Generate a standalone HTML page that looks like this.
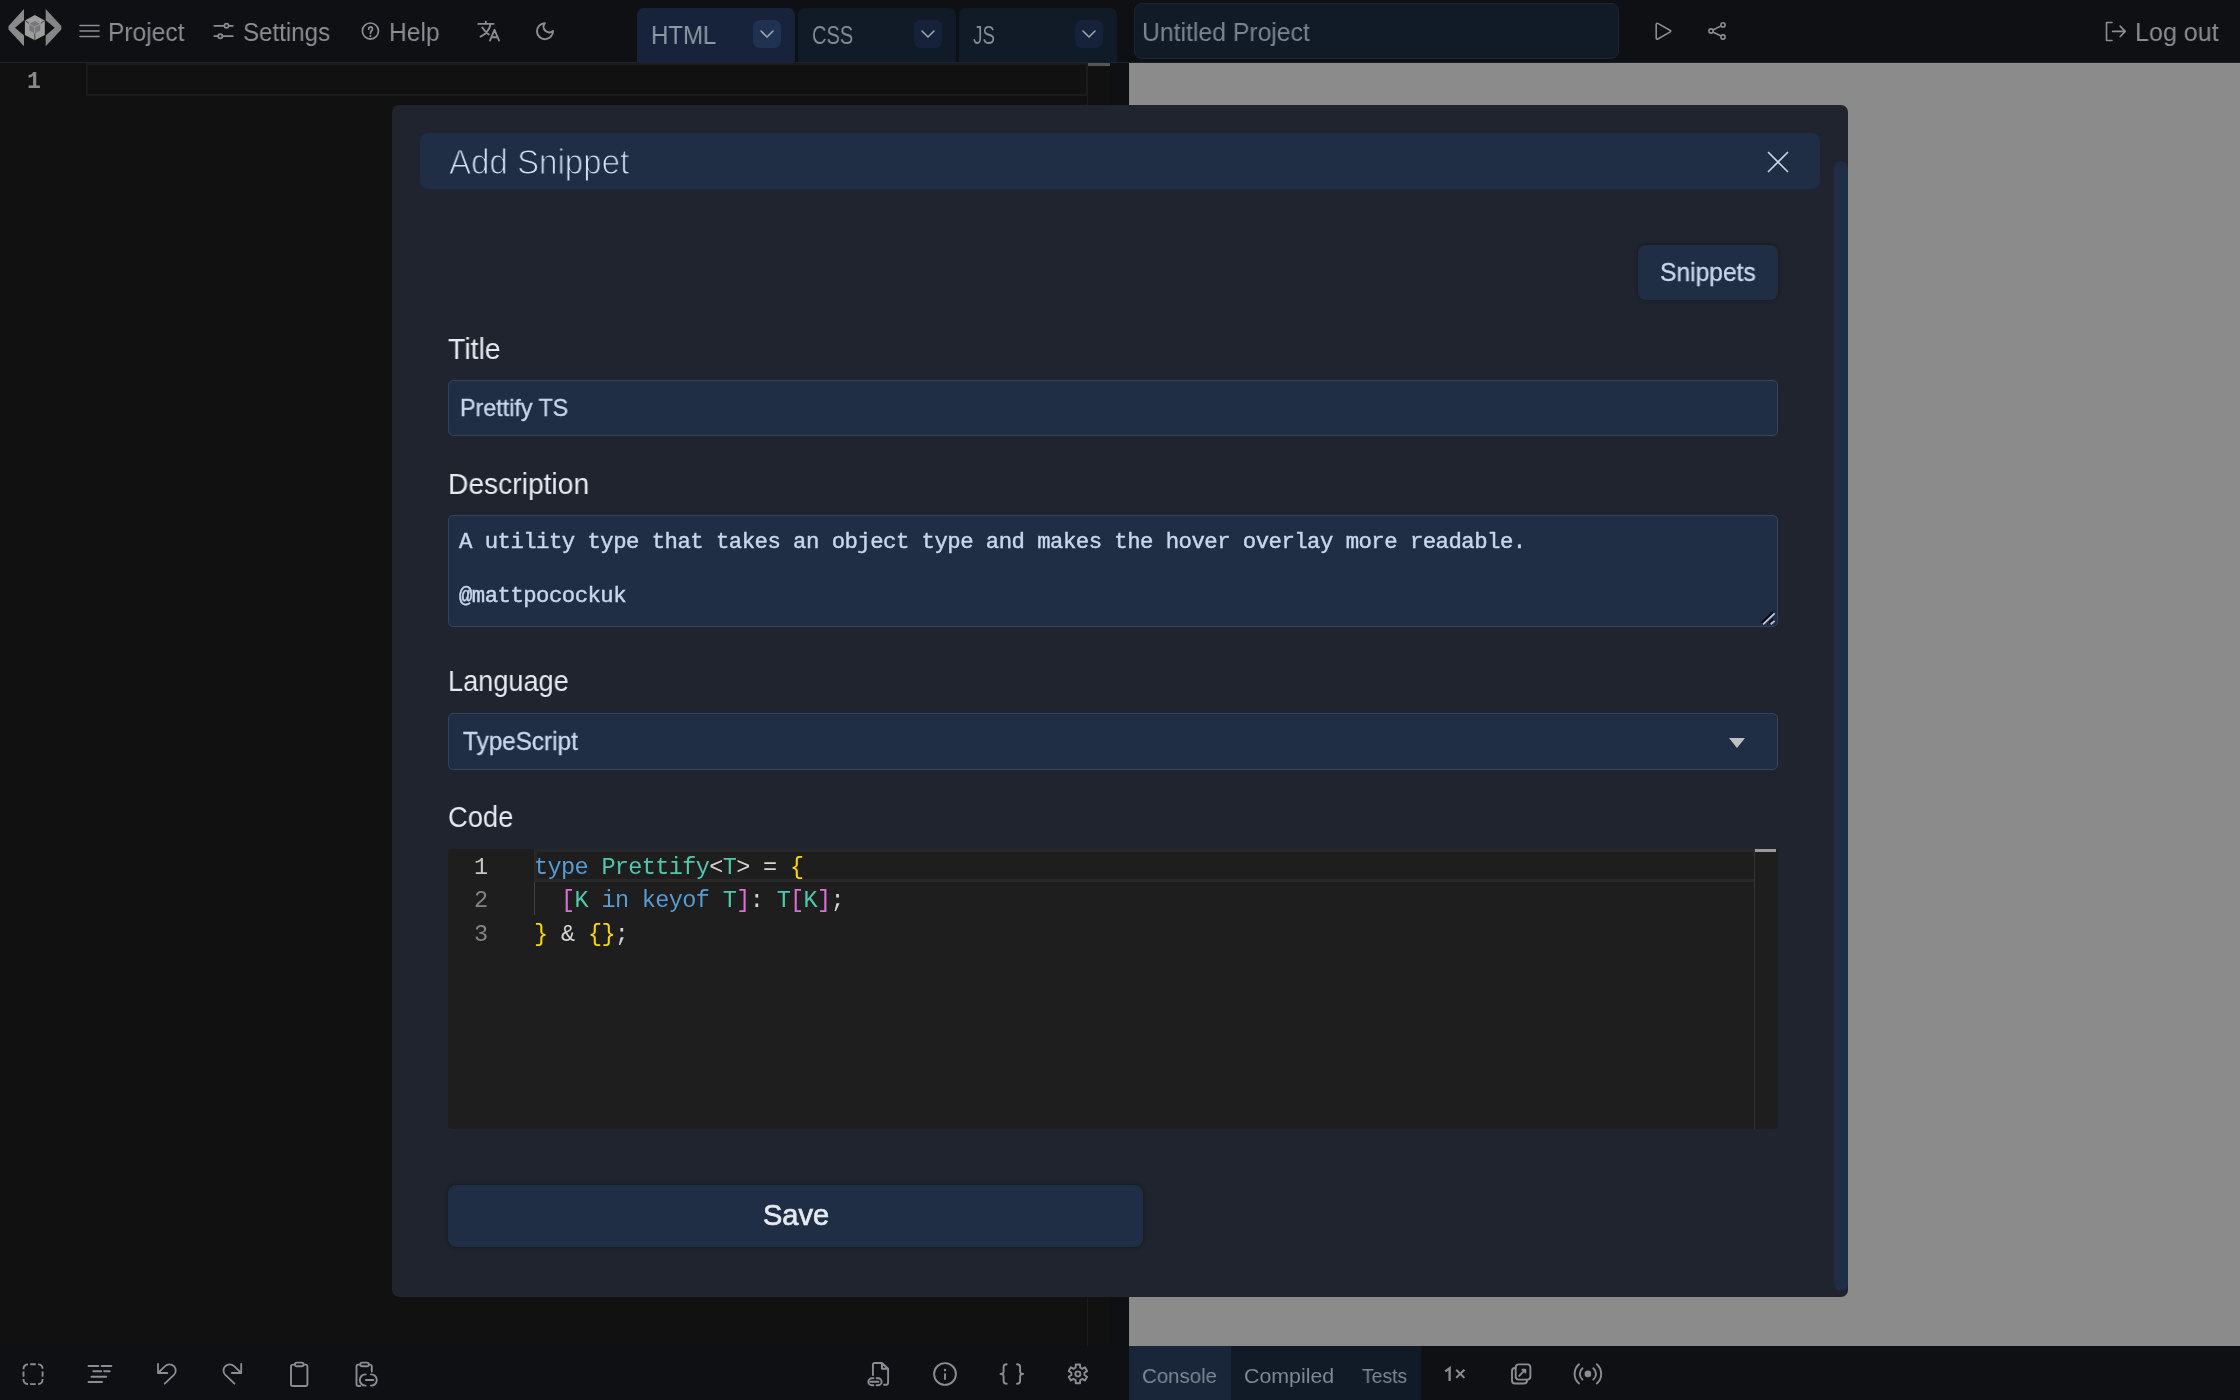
<!DOCTYPE html>
<html><head><meta charset="utf-8">
<style>
*{box-sizing:border-box;margin:0;padding:0}
html,body{width:2240px;height:1400px;overflow:hidden;background:#0e1014;font-family:"Liberation Sans",sans-serif;-webkit-font-smoothing:antialiased}
.a{position:absolute}
.t{position:absolute;white-space:pre;line-height:1;transform-origin:0 0;will-change:transform}
.mono{font-family:"Liberation Mono",monospace}
svg{position:absolute;overflow:visible}
#top{left:0;top:0;width:2240px;height:62px;background:#0e1014}
#topline{left:0;top:62px;width:2240px;height:1px;background:#1c2330}
.tb{color:#8a8d93;font-size:26px}
.tab{top:8px;height:54px;width:158px;border-radius:7px 7px 0 0;background:#111a27}
.dd{width:28px;height:28px;border-radius:7px;background:#15223a}
#editor{left:0;top:63px;width:1110px;height:1283px;background:#111111}
#result{left:1129px;top:63px;width:1111px;height:1283px;background:#8b8b8b}
#bottom{left:0;top:1346px;width:2240px;height:54px;background:#0e1014}
#modal{left:392px;top:105px;width:1456px;height:1192px;border-radius:7px;background:#1f242e}
.lbl{color:#e6eaf0;font-size:29px}
.inp{background:#1f2d45;border:1px solid #33445c;border-radius:5px}
.itx{color:#c8d6ea;-webkit-text-stroke:0.35px #c8d6ea}
</style></head><body>
<div id="top" class="a"></div>
<div id="topline" class="a"></div>
<div id="editor" class="a"></div>
<div id="result" class="a"></div>
<div id="bottom" class="a"></div>

<!-- logo -->
<svg style="left:0;top:0" width="70" height="56">
  <polygon fill="#8a8a8a" points="24,9 8.5,26 8.5,29.5 24,46.2 24,35.4 15,27.7 24,20.3"/>
  <polygon fill="#858585" points="45.7,9 61.3,26 61.3,29.5 45.7,46.2 45.7,35.4 54.7,27.7 45.7,20.3"/>
  <polygon fill="#9d9d9d" points="34.8,15 44.8,20.5 44.8,34.9 34.8,40.3 24.9,34.9 24.9,20.5"/>
  <polygon fill="#777" points="34.8,21 40.3,24 40.3,30.5 34.8,33.5 29.3,30.5 29.3,24"/>
  <path d="M29.3,24 L34.8,27 L40.3,24 M34.8,27 V33.5" stroke="#a3a3a3" stroke-width="0.8" fill="none"/>
  <path d="M34.8,33.5 V40M25.2,20.7L29,23.3M44.5,20.7L40.7,23.3" stroke="#3a3a3a" stroke-width="0.9"/>
</svg>
<!-- hamburger -->
<svg style="left:79px;top:24px" width="22" height="14"><path d="M1,1.5H20M1,7H20M1,12.5H20" stroke="#8a8d93" stroke-width="1.6" stroke-linecap="round"/></svg>
<div class="t tb" style="left:108px;top:19px;transform:scaleX(.944)">Project</div>
<!-- settings -->
<svg style="left:214px;top:22px" width="20" height="18"><g stroke="#8a8d93" stroke-width="1.7" fill="none" stroke-linecap="round"><path d="M0.3,3.8H10.3M14.7,3.8H18.8M0.3,14.2H4.1M8.5,14.2H18.8"/><circle cx="12.5" cy="3.8" r="2.1"/><circle cx="6.3" cy="14.2" r="2.1"/></g></svg>
<div class="t tb" style="left:243px;top:19px;transform:scaleX(.927)">Settings</div>
<!-- help -->
<svg style="left:360px;top:20px" width="22" height="22"><g stroke="#8a8d93" stroke-width="1.7" fill="none" stroke-linecap="round"><circle cx="10.4" cy="11.03" r="8.05"/><path d="M8.65,9.2C8.65,7.9 9.5,6.95 10.5,6.95C11.6,6.95 12.45,7.8 12.45,8.9C12.45,10.5 10.5,10.9 10.5,13.3"/></g><circle cx="10.4" cy="16.1" r="1.05" fill="#8a8d93"/></svg>
<div class="t tb" style="left:389px;top:19px;transform:scaleX(.947)">Help</div>
<!-- translate -->
<svg style="left:472px;top:14px" width="32" height="32"><g stroke="#8a8d93" stroke-width="1.9" fill="none" stroke-linecap="round" stroke-linejoin="round"><path d="M6.3,9.9H21.6M13.8,7.8V9.9M18.3,11.2C17,16 13,20.5 8.5,22.6M10.3,13.5C12,16 14,18.5 16.7,20.4"/><path d="M18,26.5L22.5,15.8L27,26.5M19.3,23.2H25.7"/></g></svg>
<!-- moon -->
<svg style="left:525px;top:14px" width="40" height="40"><path d="M19.9,9.2A8,8 0 1 0 28,16.9A5.6,5.6 0 0 1 19.9,9.2Z" stroke="#8a8d93" stroke-width="2" fill="none" stroke-linejoin="round"/></svg>

<!-- editor tabs -->
<div class="a tab" style="left:637px;background:#17233a"></div>
<div class="t tb" style="left:650.5px;top:22px;color:#8f98a4;transform:scaleX(.922)">HTML</div>
<div class="a dd" style="left:753px;top:20px;background:#1f3252"></div>
<svg style="left:753px;top:20px" width="28" height="28"><path d="M8,11L14,17L20,11" stroke="#9aa3ae" stroke-width="1.6" fill="none" stroke-linecap="round" stroke-linejoin="round"/></svg>
<div class="a tab" style="left:798px"></div>
<div class="t tb" style="left:812px;top:22px;color:#828b97;transform:scaleX(.773)">CSS</div>
<div class="a dd" style="left:914px;top:20px"></div>
<svg style="left:914px;top:20px" width="28" height="28"><path d="M8,11L14,17L20,11" stroke="#9aa3ae" stroke-width="1.6" fill="none" stroke-linecap="round" stroke-linejoin="round"/></svg>
<div class="a tab" style="left:959px"></div>
<div class="t tb" style="left:973px;top:22px;color:#828b97;transform:scaleX(.723)">JS</div>
<div class="a dd" style="left:1075px;top:20px"></div>
<svg style="left:1075px;top:20px" width="28" height="28"><path d="M8,11L14,17L20,11" stroke="#9aa3ae" stroke-width="1.6" fill="none" stroke-linecap="round" stroke-linejoin="round"/></svg>

<!-- project title -->
<div class="a" style="left:1134px;top:3px;width:485px;height:56px;border-radius:8px;background:#111a27;border:1px solid #1a2536"></div>
<div class="t tb" style="left:1141.5px;top:19px;color:#7b8591;transform:scaleX(.952)">Untitled Project</div>
<!-- play/share -->
<svg style="left:1654px;top:21px" width="20" height="21"><path d="M2.2,3.3V17.1A1.1,1.1 0 0 0 3.8,18L16.3,10.9A0.8,0.8 0 0 0 16.3,9.5L3.8,2.4A1.1,1.1 0 0 0 2.2,3.3Z" stroke="#8a8d93" stroke-width="1.6" fill="none" stroke-linejoin="round"/></svg>
<svg style="left:1707px;top:21px" width="20" height="20"><g stroke="#8a8d93" stroke-width="1.6" fill="none"><circle cx="4" cy="10" r="2.1"/><circle cx="16" cy="3.9" r="2.1"/><circle cx="16" cy="16" r="2.1"/><path d="M5.9,9L14.1,4.9M5.9,11L14.1,15"/></g></svg>
<!-- logout -->
<svg style="left:2105px;top:21px" width="22" height="21"><g stroke="#8a8d93" stroke-width="1.6" fill="none" stroke-linecap="round" stroke-linejoin="round"><path d="M7,1.5H1.5V19.5H7"/><path d="M7.6,10.4H20M15.1,5.1L20.2,10.4L15.1,15.7"/></g></svg>
<div class="t tb" style="left:2135px;top:19px;transform:scaleX(.965)">Log out</div>

<!-- editor content -->
<div class="t mono" style="left:27px;top:71px;font-size:23px;color:#8a8a8a;font-weight:bold">1</div>
<div class="a" style="left:86px;top:63px;width:1002px;height:33px;border:2px solid #1b1b1b"></div>
<div class="a" style="left:1087px;top:63px;width:1px;height:1283px;background:#1c1c1c"></div>
<div class="a" style="left:1088px;top:63px;width:22px;height:3px;background:#555"></div>

<!-- bottom toolbar tabs -->
<div class="a" style="left:1129px;top:1346px;width:102px;height:54px;background:#19263a"></div>
<div class="a" style="left:1231px;top:1346px;width:190px;height:54px;background:#111a27"></div>
<div class="t" style="left:1142px;top:1364.7px;font-size:21px;color:#7d8894;transform:scaleX(.974)">Console</div>
<div class="t" style="left:1244px;top:1364.7px;font-size:21px;color:#7d8894;transform:scaleX(1.017)">Compiled</div>
<div class="t" style="left:1362px;top:1364.7px;font-size:21px;color:#7d8894;transform:scaleX(.92)">Tests</div>
<svg style="left:1440px;top:1360px" width="30" height="26"><g stroke="#8a8d93" fill="none"><path d="M5.2,11.4L9.6,8.2V20.9" stroke-width="2.3"/><path d="M16.2,9.8L24.4,17.9M24.4,9.8L16.2,17.9" stroke-width="2"/></g></svg>


<!-- bottom toolbar icons -->
<svg style="left:22px;top:1363px" width="24" height="24"><g stroke="#8a8d93" stroke-width="1.9" fill="none" stroke-linecap="butt">
<path d="M1.5,6.2V5.7A4.5,4.5 0 0 1 6,1.2H5.6M8.2,1.2H13.7M16.3,1.2H16.1A4.5,4.5 0 0 1 20.6,5.7V5.8M20.6,8.6V13.7M20.6,16V16.6A4.5,4.5 0 0 1 16.1,21.1H16.3M13.7,21.1H8.2M5.6,21.1H6A4.5,4.5 0 0 1 1.5,16.6V16.1M1.5,13.7V8.6"/></g></svg>
<svg style="left:86px;top:1362px" width="28" height="24"><g stroke="#8a8d93" stroke-width="1.9" fill="none" stroke-linecap="round"><path d="M2.5,4H12.4M15.7,4H25.4M7.3,9.3H15.2M18.2,9.3H23.7M5.5,14.7H20.3M2.5,20H16"/></g></svg>
<svg style="left:150px;top:1356px" width="32" height="32"><g stroke="#8a8d93" stroke-width="1.8" fill="none" stroke-linecap="round" stroke-linejoin="round"><path d="M8,7.8V17H17.4M8,17L15.1,10.1A6.2,6.2 0 0 1 23.9,18.9L14.7,27.7"/></g></svg>
<svg style="left:216px;top:1356px" width="32" height="32"><g transform="translate(33.2,0) scale(-1,1)" stroke="#8a8d93" stroke-width="1.8" fill="none" stroke-linecap="round" stroke-linejoin="round"><path d="M8,7.8V17H17.4M8,17L15.1,10.1A6.2,6.2 0 0 1 23.9,18.9L14.7,27.7"/></g></svg>
<svg style="left:280px;top:1354px" width="32" height="36"><g stroke="#8a8d93" stroke-width="1.9" fill="none" stroke-linecap="round" stroke-linejoin="round"><path d="M14.3,10.6H12.8A1.8,1.8 0 0 0 11,12.4V30.2A1.8,1.8 0 0 0 12.8,32H25.6A1.8,1.8 0 0 0 27.4,30.2V12.4A1.8,1.8 0 0 0 25.6,10.6H24"/><rect x="15" y="8.6" width="8.6" height="3.6" rx="1.8"/></g></svg>
<svg style="left:346px;top:1354px" width="36" height="36"><g stroke="#8a8d93" stroke-width="1.9" fill="none" stroke-linecap="round" stroke-linejoin="round"><path d="M13.6,10.6H12.3A1.8,1.8 0 0 0 10.5,12.4V30.2A1.8,1.8 0 0 0 12.3,32H14.4"/><path d="M23.4,10.6H24A1.8,1.8 0 0 1 25.8,12.4V17.5"/><rect x="14.3" y="8.6" width="8.5" height="3.6" rx="1.8"/><path d="M19.7,20.4H19.4A5.6,5.6 0 0 0 19.4,31.6H19.7M24.9,20.4H25.2A5.6,5.6 0 0 1 25.2,31.6H24.9M19.8,26H27.3"/></g></svg>

<svg style="left:860px;top:1354px" width="36" height="36"><g stroke="#8a8d93" stroke-width="1.9" fill="none" stroke-linecap="round" stroke-linejoin="round"><path d="M12.9,21V11A2,2 0 0 1 14.9,9H21.9L28.1,14.7V28.8A2,2 0 0 1 26.1,30.8H24.1M21.9,9V14.7H28.1"/><path d="M13.4,24.3H11.8A3.45,3.45 0 0 0 11.8,31.2H13.4M16.6,24.3H18.2A3.45,3.45 0 0 1 18.2,31.2H16.6M10.5,27.8H18.5"/></g></svg>
<svg style="left:930px;top:1359px" width="30" height="30"><g stroke="#8a8d93" stroke-width="1.9" fill="none" stroke-linecap="round"><circle cx="15" cy="15" r="10.9"/><path d="M15,15.2V20"/></g><circle cx="15" cy="11" r="1.2" fill="#8a8d93"/></svg>
<svg style="left:994px;top:1354px" width="36" height="36"><g stroke="#8a8d93" stroke-width="1.9" fill="none" stroke-linecap="round" stroke-linejoin="round"><path d="M12.7,10.3C10.6,10.3 9.6,11.3 9.6,13V17.4C9.6,19 8.6,19.9 6.5,19.9C8.6,19.9 9.6,20.8 9.6,22.4V27C9.6,28.7 10.6,29.7 12.7,29.7M23,10.3C25.1,10.3 26.1,11.3 26.1,13V17.4C26.1,19 27.1,19.9 29.2,19.9C27.1,19.9 26.1,20.8 26.1,22.4V27C26.1,28.7 25.1,29.7 23,29.7"/></g></svg>
<svg style="left:1058px;top:1354px" width="40" height="40"><g transform="translate(19.9,19.9)" stroke="#8a8d93" stroke-width="1.9" fill="none" stroke-linejoin="round"><path d="M-2.26,-6.20 L-2.16,-9.35 L2.16,-9.35 L2.26,-6.20 A6.60,6.60 0 0 1 4.24,-5.06 L7.02,-6.55 L9.18,-2.81 L6.50,-1.15 A6.60,6.60 0 0 1 6.50,1.15 L9.18,2.81 L7.02,6.55 L4.24,5.06 A6.60,6.60 0 0 1 2.26,6.20 L2.16,9.35 L-2.16,9.35 L-2.26,6.20 A6.60,6.60 0 0 1 -4.24,5.06 L-7.02,6.55 L-9.18,2.81 L-6.50,1.15 A6.60,6.60 0 0 1 -6.50,-1.15 L-9.18,-2.81 L-7.02,-6.55 L-4.24,-5.06 A6.60,6.60 0 0 1 -2.26,-6.20Z"/><circle cx="0" cy="0" r="2.5"/></g></svg>

<svg style="left:1500px;top:1356px" width="36" height="36"><g stroke="#8a8d93" stroke-width="1.9" fill="none" stroke-linecap="round" stroke-linejoin="round"><rect x="15.7" y="8.4" width="14.7" height="15.2" rx="3"/><path d="M15.7,12H15C13.3,12 12,13.3 12,15V24.5C12,26.2 13.3,27.5 15,27.5H24C25.7,27.5 27,26.2 27,24.5V23.6"/><path d="M19.2,19.9L25.3,13.7M22.4,13.7H25.3V16.6"/></g></svg>
<svg style="left:1570px;top:1356px" width="36" height="36"><g stroke="#8a8d93" stroke-width="1.9" fill="none" stroke-linecap="round"><path d="M9,8.3C6,11 4.6,14.3 4.6,17.9C4.6,21.5 6,24.8 9,27.5M12.5,12.3C10.8,13.8 9.8,15.8 9.8,17.9C9.8,20 10.8,22 12.5,23.6M23.3,12.3C25,13.8 26,15.8 26,17.9C26,20 25,22 23.3,23.6M26.8,8.3C29.8,11 31.2,14.3 31.2,17.9C31.2,21.5 29.8,24.8 26.8,27.5"/></g><circle cx="17.9" cy="17.9" r="3.3" fill="#8a8d93"/></svg>

<!-- MODAL -->
<div id="modal" class="a"></div>
<div class="a" style="left:420px;top:133px;width:1400px;height:56px;border-radius:7px;background:#1f2d45"></div>
<div class="t" style="left:448.5px;top:144px;font-size:35px;color:#d2e0f4;-webkit-text-stroke:1.1px #1f2d45;transform:scaleX(.945)">Add Snippet</div>
<svg style="left:1767px;top:151px" width="22" height="22"><path d="M1,1L21,21M21,1L1,21" stroke="#c8d4e4" stroke-width="1.6"/></svg>
<div class="a" style="left:1834px;top:161px;width:14px;height:1130px;border-radius:7px;background:#1f2d45"></div>

<div class="a inp" style="left:1638px;top:245px;width:140px;height:55px;border:none;border-radius:8px;box-shadow:0 0 3px 1px #181c24"></div>
<div class="t itx" style="left:1660px;top:260px;font-size:25px;transform:scaleX(.984)">Snippets</div>

<div class="t lbl" style="left:447.5px;top:334.5px;transform:scaleX(.98)">Title</div>
<div class="a inp" style="left:448px;top:380px;width:1330px;height:56px"></div>
<div class="t itx" style="left:459.5px;top:395.5px;font-size:24px;transform:scaleX(.97)">Prettify TS</div>

<div class="t lbl" style="left:448px;top:469.5px;transform:scaleX(.973)">Description</div>
<div class="a inp" style="left:448px;top:515px;width:1330px;height:112px"></div>
<div class="t itx mono" style="left:459px;top:531px;font-size:22.3px;letter-spacing:-0.53px;-webkit-text-stroke:0.45px #c8d6ea">A utility type that takes an object type and makes the hover overlay more readable.</div>
<div class="t itx mono" style="left:459px;top:585px;font-size:22.3px;letter-spacing:-0.53px;-webkit-text-stroke:0.45px #c8d6ea">@mattpocockuk</div>
<svg style="left:1756px;top:608px" width="24" height="20"><path d="M5.6,14.8L17.1,3.9M13.2,14.8L17.1,11.4" stroke="#05070c" stroke-width="1.6"/><path d="M7.1,16.3L18.6,5.4M14.7,16.3L18.6,12.9" stroke="#c0c8d6" stroke-width="1.8"/></svg>

<div class="t lbl" style="left:448px;top:667px;transform:scaleX(.935)">Language</div>
<div class="a inp" style="left:448px;top:713px;width:1330px;height:57px"></div>
<div class="t itx" style="left:463px;top:729px;font-size:25px;transform:scaleX(.972)">TypeScript</div>
<svg style="left:1728px;top:737px" width="18" height="12"><path d="M1,1H17L9,11Z" fill="#c0c0c0"/></svg>

<div class="t lbl" style="left:448px;top:803px;transform:scaleX(.943)">Code</div>
<div class="a" style="left:448px;top:849px;width:1330px;height:280px;background:#1e1e1e;border-radius:4px"></div>
<div class="a" style="left:534px;top:849px;width:1220px;height:33px;border:3px solid #282828;border-right:none"></div>
<div class="a" style="left:1754px;top:849px;width:1px;height:280px;background:#333"></div>
<div class="a" style="left:1755px;top:849px;width:21px;height:3px;background:#9a9a9a"></div>
<div class="a" style="left:534px;top:882px;width:1px;height:33px;background:#404040"></div>
<div class="t mono" style="left:474px;top:856px;font-size:23.5px;color:#c6c6c6">1</div>
<div class="t mono" style="left:474px;top:889px;font-size:23.5px;color:#858585">2</div>
<div class="t mono" style="left:474px;top:923px;font-size:23.5px;color:#858585">3</div>
<div class="t mono" style="left:534px;top:856px;font-size:23.5px;letter-spacing:-0.63px;color:#d4d4d4"><span style="color:#569cd6">type</span> <span style="color:#4ec9b0">Prettify</span>&lt;<span style="color:#4ec9b0">T</span>&gt; = <span style="color:#ffd700">{</span></div>
<div class="t mono" style="left:534px;top:889px;font-size:23.5px;letter-spacing:-0.63px;color:#d4d4d4">  <span style="color:#da70d6">[</span><span style="color:#4ec9b0">K</span> <span style="color:#569cd6">in</span> <span style="color:#569cd6">keyof</span> <span style="color:#4ec9b0">T</span><span style="color:#da70d6">]</span>: <span style="color:#4ec9b0">T</span><span style="color:#da70d6">[</span><span style="color:#4ec9b0">K</span><span style="color:#da70d6">]</span>;</div>
<div class="t mono" style="left:534px;top:923px;font-size:23.5px;letter-spacing:-0.63px;color:#d4d4d4"><span style="color:#ffd700">}</span> &amp; <span style="color:#ffd700">{}</span>;</div>

<div class="a" style="left:448px;top:1185px;width:695px;height:62px;border-radius:8px;background:#1f2d45;box-shadow:0 0 3px 1px #181c24"></div>
<div class="t" style="left:762.5px;top:1201px;font-size:29px;color:#e6eaf0;-webkit-text-stroke:0.7px #e6eaf0">Save</div>
</body></html>
